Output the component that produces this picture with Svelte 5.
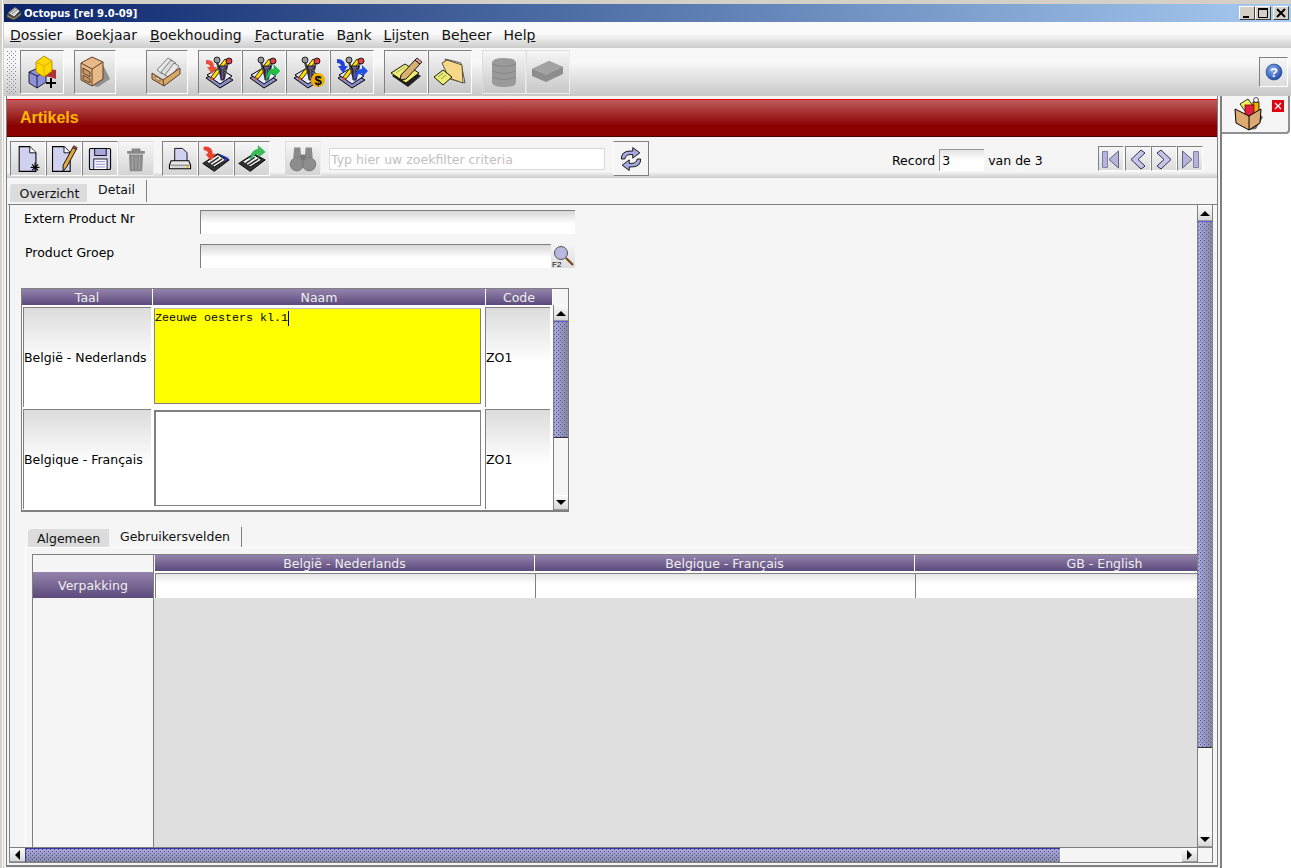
<script>
  const menus = [
    ['D', 'ossier'], ['Boek', 'j', 'aar'], ['', 'B', 'oekhouding'], ['', 'F', 'acturatie'],
    ['B', 'a', 'nk'], ['', 'L', 'ijsten'], ['Be', 'h', 'eer'], ['Hel', 'p', '']
  ]
  const menuItems = menus.map((m) => (m.length === 2 ? ['', m[0], m[1]] : m))

  const topTools = [
    { icon: 'cubes', cls: 'gap-r' }, { icon: 'cabinet', cls: 'narrow gap-r2' }, { icon: 'cards', cls: 'narrow gap-r' },
    { icon: 'toolIn' }, { icon: 'toolOut' }, { icon: 'toolMoney' }, { icon: 'toolBoth', cls: 'gap-r' },
    { icon: 'notepad' }, { icon: 'folder', cls: 'gap-r' },
    { icon: 'db', cls: 'off' }, { icon: 'block', cls: 'off' }
  ]
  const actions = [
    { icon: 'newdoc' }, { icon: 'editdoc' }, { icon: 'save' }, { icon: 'trash', cls: 'off gap' },
    { icon: 'print' }, { icon: 'diskIn' }, { icon: 'diskOut', cls: 'gap2' }, { icon: 'binoculars', cls: 'off gap3' }
  ]
  const rows = [
    { lang: 'België - Nederlands', text: 'Zeeuwe oesters kl.1', code: 'ZO1', active: true },
    { lang: 'Belgique - Français', text: '', code: 'ZO1', active: false }
  ]
  const langs = ['België - Nederlands', 'Belgique - Français', 'GB - English']
</script>

{#snippet tool(k)}
  <svg width="34" height="34" viewBox="0 0 34 34">
    <path d="M3 23 L15 16 L30 25 L17 33 Z" fill="#8d8dc8" stroke="#000"/>
    <path d="M4 20 L16 13 L29 21 L17 29 Z" fill="#e8e8ff" stroke="#000"/>
    <path d="M8 22 L22 4 L25 6 L11 24 Z" fill="#ffe000" stroke="#000" stroke-width=".8"/>
    <path d="M8 22 L7 26 L11 24Z" fill="#e06030"/>
    <path d="M14 7 L19 24" stroke="#444" stroke-width="2.4"/>
    <path d="M25 7 L21 24" stroke="#555" stroke-width="2"/>
    <path d="M16 11 H24 L23 14 H21 V25 H18 V14 H17Z" fill="#6a5a90" stroke="#000" stroke-width=".8"/>
    <circle cx="14" cy="5" r="3" fill="#999" stroke="#000" stroke-width=".8"/>
    <circle cx="26" cy="6" r="3" fill="#e04040" stroke="#000" stroke-width=".8"/>
    {#if k === 'toolIn'}
      <path d="M3 5 Q11 4 11 12 L14 12 L9 19 L4 12 L7 12 Q7 9 3 9Z" fill="#e8503a"/>
    {:else if k === 'toolOut'}
      <path d="M19 27 Q19 14 27 14 L27 10 L33 16 L27 22 L27 18 Q22 18 19 27Z" fill="#22c040" stroke="#0a6" stroke-width=".5"/>
    {:else if k === 'toolMoney'}
      <circle cx="27" cy="25" r="7" fill="#f0b000"/>
      <text x="27" y="30" font-size="13" font-weight="700" text-anchor="middle" fill="#000" font-family="Liberation Sans, sans-serif">$</text>
    {:else}
      <path d="M2 4 Q10 4 10 11 L13 11 L8 18 L3 11 L6 11 Q6 8 2 8Z" fill="#2040e0"/>
      <path d="M19 27 Q19 14 27 14 L27 10 L33 16 L27 22 L27 18 Q22 18 19 27Z" fill="#2050e8"/>
    {/if}
  </svg>
{/snippet}

{#snippet icon(k)}
  {#if k.startsWith('tool')}
    {@render tool(k)}
  {:else}
    <svg width="34" height="34" viewBox="0 0 34 34">
      {#if k === 'cubes'}
        <path d="M18 21 Q22 13 31 15 L31 24 L25 22 Z" fill="#b03038"/>
        <path d="M4 17 L13 13 L21 17 L21 27 L12 33 L4 28 Z" fill="#8f8fe0" stroke="#000" stroke-width=".8"/>
        <path d="M4 17 L12 21 L12 33 M12 21 L21 17" fill="none" stroke="#000" stroke-width=".8"/>
        <path d="M11 7 L19 1 L27 6 L27 16 L19 22 L11 17 Z" fill="#ffd800" stroke="#a08000" stroke-width=".8"/>
        <path d="M11 7 L19 11 L27 6 M19 11 L19 22" fill="none" stroke="#d0a000" stroke-width=".8"/>
        <path d="M26 23 V33 M21 28 H31" stroke="#000" stroke-width="2"/>
      {:else if k === 'cabinet'}
        <path d="M24 8 L32 24 L20 32 L12 30Z" fill="#909090"/>
        <path d="M3 8 L14 2 L25 7 L25 24 L14 31 L3 25 Z" fill="#e8b888" stroke="#5a4028"/>
        <path d="M3 8 L14 14 L25 7 M14 14 L14 31" fill="none" stroke="#5a4028"/>
        <path d="M5 13 L12 17 L12 22 L5 18Z M5 20 L12 24 L12 28 L5 24.5Z" fill="#c89868" stroke="#5a4028"/>
      {:else if k === 'cards'}
        <path d="M7 15 L18 3 L23 6 L12 19Z" fill="#e8e8e8" stroke="#666" stroke-width=".8"/>
        <path d="M11 17 L21 5 L26 8 L16 21Z" fill="#dcdcdc" stroke="#666" stroke-width=".8"/>
        <path d="M15 20 L24 8 L29 11 L20 23Z" fill="#e8e8e8" stroke="#666" stroke-width=".8"/>
        <path d="M2 18 L13 25 L30 13 L30 19 L14 31 L2 24Z" fill="#d8a868" stroke="#5a4028"/>
        <path d="M13 25 L14 31" stroke="#5a4028"/>
        <path d="M5 21 L10 24 L10 26.5 L5 23.5Z" fill="#f0d8b0" stroke="#5a4028" stroke-width=".6"/>
      {:else if k === 'notepad'}
        <path d="M3 21 L17 11 L32 21 L19 32 Z" fill="#222"/>
        <path d="M2 18 L16 9 L30 18 L17 28 Z" fill="#ecec70" stroke="#000" stroke-width=".9"/>
        <path d="M7 18 L16 12 M11 21 L20 15" stroke="#998" stroke-width=".8"/>
        <path d="M12 20 L26 5 L31 9 L17 24 L11 25 Z" fill="#d8b070" stroke="#000" stroke-width=".9"/>
        <path d="M26 5 L28 3 L33 7 L31 9Z" fill="#e8a0a0" stroke="#000" stroke-width=".8"/>
      {:else if k === 'folder'}
        <path d="M12 4 L28 8 L32 28 L17 24Z" fill="#fff" stroke="#555"/>
        <path d="M9 8 L14 5 L29 10 L30 28 L16 23 Z" fill="#f8d888" stroke="#553"/>
        <path d="M1 22 L10 15 L19 22 L10 30 Z" fill="#ecec70" stroke="#000" stroke-width=".9"/>
        <path d="M5 22 L10 18 M8 24 L13 20" stroke="#776" stroke-width=".8"/>
      {:else if k === 'db'}
        <path d="M5 8 Q5 3 17 3 Q29 3 29 8 L29 27 Q29 32 17 32 Q5 32 5 27 Z" fill="#9a9a9a"/>
        <path d="M5 9 Q17 14 29 9 M5 16 Q17 21 29 16 M5 22 Q17 27 29 22" stroke="#858585" fill="none"/>
      {:else if k === 'block'}
        <path d="M1 14 L18 6 L32 12 L32 19 L15 27 L1 21 Z" fill="#8d8d8d"/>
        <path d="M1 14 L18 6 L32 12 L15 20 Z" fill="#a3a3a3"/>
      {:else if k === 'newdoc'}
        <path d="M7 3 H19 L26 10 V31 H7 Z" fill="#d0d0f0" stroke="#000" stroke-width="1.2"/>
        <path d="M19 3 V10 H26" fill="#fff" stroke="#000"/>
        <path d="M25 21 V32 M20 26.5 H30 M21.5 23 L28.5 30 M28.5 23 L21.5 30" stroke="#000" stroke-width="1.2"/>
      {:else if k === 'editdoc'}
        <path d="M4 3 H17 L24 10 V31 H4 Z" fill="#d0d0f0" stroke="#000" stroke-width="1.2"/>
        <path d="M17 3 V10 H24" fill="#fff" stroke="#000"/>
        <path d="M16 24 L27 4 L31 6 L20 26 L16 31 Z" fill="#e0a840" stroke="#000"/>
        <path d="M27 4 L28 2 L32 4 L31 6Z" fill="#d85050" stroke="#000" stroke-width=".7"/>
      {:else if k === 'save'}
        <rect x="5" y="5" width="24" height="24" rx="1.5" fill="#d0d0f0" stroke="#000" stroke-width="1.2"/>
        <rect x="11" y="5" width="13" height="8" fill="#a8a8d8" stroke="#000"/>
        <rect x="10" y="17" width="15" height="12" fill="#fff" stroke="#000"/>
        <path d="M12 20 H23 M12 23 H23 M12 26 H23" stroke="#8080c8"/>
      {:else if k === 'trash'}
        <path d="M12 5 H22 V8 H12Z M7 8 H27 V11 H7Z" fill="#888"/>
        <path d="M9 12 H25 L24 31 H10 Z" fill="#8c8c8c"/>
        <path d="M13 14 V29 M17 14 V29 M21 14 V29" stroke="#aaa"/>
      {:else if k === 'print'}
        <path d="M11 5 H20 L25 10 V20 H11 Z" fill="#d0d0f0" stroke="#000"/>
        <path d="M7 19 H27 L29 24 V28 H5 V24 Z" fill="#e8e8e8" stroke="#000" stroke-width="1.2"/>
        <path d="M6 24 H28" stroke="#666"/>
        <path d="M8 26 H23" stroke="#999" stroke-dasharray="1 1"/>
        <rect x="24" y="25" width="3" height="2" fill="#e0c020"/>
      {:else if k === 'diskIn' || k === 'diskOut'}
        <path d="M2 22 L19 11 L32 18 L15 31 Z" fill="#333" stroke="#000"/>
        <path d="M6 20 L19 12 L28 18 L15 26 Z" fill="#eee" stroke="#000"/>
        <path d="M10 22 L20 15 M13 24 L24 17" stroke="#222" stroke-width="1.6"/>
        {#if k === 'diskIn'}
          <path d="M21 12 L30 16 L26 19" fill="none" stroke="#3040d0" stroke-width="1.6"/>
          <path d="M3 3 Q13 2 13 11 L17 11 L11 19 L5 11 L8 11 Q8 7 3 7Z" fill="#e8402a"/>
        {:else}
          <path d="M15 19 Q15 7 24 6 L24 2 L32 9 L24 15 L24 11 Q19 11 15 19Z" fill="#38c050" stroke="#085" stroke-width=".5"/>
        {/if}
      {:else if k === 'binoculars'}
        <path d="M7 4 H14 L15 16 H6 Z M20 4 H27 L28 16 H19 Z" fill="#8a8a8a"/>
        <rect x="14" y="12" width="6" height="7" fill="#777"/>
        <circle cx="10" cy="23" r="7.5" fill="#8d8d8d" stroke="#777"/>
        <circle cx="24" cy="23" r="7.5" fill="#8d8d8d" stroke="#777"/>
      {:else if k === 'refresh'}
        <path d="M6 17 Q6 8 16 8 L19 8 L19 4 L27 10 L19 16 L19 12 L16 12 Q11 12 10 17 Z" fill="#a8a8e0" stroke="#000"/>
        <path d="M28 17 Q28 26 18 26 L15 26 L15 30 L7 24 L15 18 L15 22 L18 22 Q23 22 24 17 Z" fill="#a8a8e0" stroke="#000"/>
      {/if}
    </svg>
  {/if}
{/snippet}

<div class="window">
  <div class="titlebar">
    <svg class="app-ico" width="16" height="16" viewBox="0 0 16 16">
      <path d="M1 9 L8 13 L15 7 L15 10 L8 15 L1 12Z" fill="#a08868" stroke="#443"/>
      <path d="M2 8 L9 2 L14 6 L8 12Z" fill="#ddd" stroke="#555"/>
      <path d="M4 8 L10 3 M6 9 L12 4" stroke="#777"/>
    </svg>
    <span class="title">Octopus [rel 9.0-09]</span>
    <div class="win-btns">
      <button class="win-btn"><svg width="14" height="12"><rect x="3" y="9" width="6" height="2" fill="#000"/></svg></button>
      <button class="win-btn"><svg width="14" height="12"><path d="M2.5 1.5 H11.5 V10.5 H2.5Z" fill="none" stroke="#000"/><path d="M2 2 H12" stroke="#000" stroke-width="2"/></svg></button>
      <button class="win-btn close"><svg width="14" height="12"><path d="M3 2 L11 10 M11 2 L3 10" stroke="#000" stroke-width="2"/></svg></button>
    </div>
  </div>

  <nav class="menubar">
    {#each menuItems as m}
      <span class="menu">{m[0]}<u>{m[1]}</u>{m[2]}</span>
    {/each}
  </nav>

  <div class="toolbar">
    <span class="gripper"></span>
    {#each topTools as t}
      <button class="tbtn {t.cls ?? ''}">{@render icon(t.icon)}</button>
    {/each}
    <button class="help">
      <svg width="20" height="20" viewBox="0 0 20 20">
        <defs><radialGradient id="hb" cx=".4" cy=".35" r=".7"><stop offset="0" stop-color="#8fb0f0"/><stop offset="1" stop-color="#1a48a8"/></radialGradient></defs>
        <circle cx="10" cy="10" r="8" fill="url(#hb)" stroke="#20408a" stroke-width=".6"/>
        <text x="10" y="14.5" font-size="13" font-weight="700" text-anchor="middle" fill="#fff" font-family="Liberation Sans, sans-serif">?</text>
      </svg>
    </button>
  </div>

  <div class="body">
    <main class="panel">
      <div class="banner">Artikels</div>

      <div class="actions">
        {#each actions as a}
          <button class="abtn {a.cls ?? ''}">{@render icon(a.icon)}</button>
        {/each}
        <input class="search" placeholder="Typ hier uw zoekfilter criteria" />
        <button class="abtn refresh">{@render icon('refresh')}</button>
        <div class="record">
          <span>Record</span><input class="rec-input" value="3" /><span>van de 3</span>
        </div>
        <div class="nav">
          <button class="nbtn">
            <svg width="22" height="22" viewBox="0 0 22 22"><path d="M2.5 3.5 H7.5 V19.5 H2.5Z" fill="#b4b4dc" stroke="#8080a0"/><path d="M18.5 3 V20 L9 11.5Z" fill="#b4b4dc" stroke="#606080"/></svg>
          </button>
          <button class="nbtn gap-n">
            <svg width="22" height="22" viewBox="0 0 22 22"><path d="M14 2 L18 5 L11 11.5 L18 18 L14 21 L4 11.5Z" fill="#c4c4e8" stroke="#303050"/></svg>
          </button>
          <button class="nbtn">
            <svg width="22" height="22" viewBox="0 0 22 22"><path d="M8 2 L4 5 L11 11.5 L4 18 L8 21 L18 11.5Z" fill="#c4c4e8" stroke="#303050"/></svg>
          </button>
          <button class="nbtn">
            <svg width="22" height="22" viewBox="0 0 22 22"><path d="M14.5 3.5 H19.5 V19.5 H14.5Z" fill="#b4b4dc" stroke="#8080a0"/><path d="M3.5 3 V20 L13 11.5Z" fill="#b4b4dc" stroke="#606080"/></svg>
          </button>
        </div>
      </div>

      <div class="tabs">
        <span class="tab t-over">Overzicht</span>
        <span class="tab on t-detail">Detail</span>
      </div>

      <div class="scroller">
        <div class="viewport">
          <div class="form-row first">
            <label class="lbl" for="ext">Extern Product Nr</label>
            <input id="ext" class="field wide" />
          </div>
          <div class="form-row second">
            <label class="lbl alt" for="grp">Product Groep</label>
            <input id="grp" class="field" />
            <button class="f2">
              <svg width="24" height="24" viewBox="0 0 24 24">
                <circle cx="10" cy="9" r="6.5" fill="#b8b8e0" stroke="#555"/>
                <path d="M15 14 L22 21" stroke="#7a4a20" stroke-width="2.4"/>
                <text x="1" y="23" font-size="8" fill="#000" font-family="Liberation Sans, sans-serif">F2</text>
              </svg>
            </button>
          </div>

          <div class="names">
            <div class="names-head">
              <span class="hd c1">Taal</span><span class="hd c2">Naam</span><span class="hd c3">Code</span>
            </div>
            <div class="names-body">
              <div class="names-rows">
                {#each rows as r}
                  <div class="nrow">
                    <div class="ncell c1">{r.lang}</div>
                    <div class="editor" class:active={r.active}>
                      {#if r.text}<span class="typed">{r.text}</span>{/if}
                    </div>
                    <div class="ncell c3">{r.code}</div>
                  </div>
                {/each}
              </div>
              <div class="vbar small">
                <button class="sb up"><span class="tri-u"></span></button>
                <div class="thumb small-thumb"></div>
                <div class="track"></div>
                <button class="sb"><span class="tri-d"></span></button>
              </div>
            </div>
          </div>

          <div class="subtabs">
            <span class="tab sub t-alg">Algemeen</span>
            <span class="tab on sub t-geb">Gebruikersvelden</span>
          </div>

          <div class="subpanel">
            <div class="fields">
              <div class="fields-side">
                <div class="corner"></div>
                <div class="rowhead">Verpakking</div>
              </div>
              <div class="fields-main">
                <div class="fhead">
                  {#each langs as l}<span class="hd fcol">{l}</span>{/each}
                </div>
                <div class="fcells">
                  {#each langs as l}<input class="fcell" aria-label={l} />{/each}
                </div>
                <div class="empty"></div>
              </div>
            </div>
          </div>
        </div>

        <div class="vbar">
          <button class="sb up"><span class="tri-u"></span></button>
          <div class="thumb big-thumb"></div>
          <div class="track"></div>
          <button class="sb"><span class="tri-d"></span></button>
        </div>

        <div class="hbar">
          <button class="sb h"><span class="tri-l"></span></button>
          <div class="hthumb"></div>
          <div class="track"></div>
          <button class="sb h"><span class="tri-r"></span></button>
        </div>
        <div class="sc-corner"></div>
      </div>
    </main>

    <aside class="side">
      <div class="doc-tab">
        <svg width="34" height="34" viewBox="0 0 34 34">
          <path d="M22 14 L30 20 L23 32 L16 33Z" fill="#666"/>
          <path d="M7 7 L15 2 L20 9 L12 14Z" fill="#f0f060" stroke="#000" stroke-width=".8"/>
          <rect x="20" y="5" width="6" height="13" fill="#f0b000" stroke="#000" stroke-width=".8"/>
          <circle cx="23" cy="3" r="2.4" fill="#fff" stroke="#000" stroke-width=".7"/>
          <rect x="12" y="8" width="9" height="11" fill="#e02040" stroke="#700" stroke-width=".8"/>
          <path d="M2 12 L16 19 L28 12 L27 26 L16 33 L3 26 Z" fill="#dcaa70" stroke="#000"/>
          <path d="M16 19 V33" stroke="#000"/>
        </svg>
        <span class="tab-close">
          <svg width="10" height="10"><path d="M2 2 L8 8 M8 2 L2 8" stroke="#fff" stroke-width="1.2"/></svg>
        </span>
      </div>
      <div class="side-pane"></div>
    </aside>
  </div>
</div>

<style>
  :global(body) { margin: 0; background: #d4d0c8; }
  .window {
    width: 1291px;
    height: 868px;
    box-sizing: border-box;
    padding: 4px 0 0 4px;
    display: flex;
    flex-direction: column;
    overflow: hidden;
    font-family: "DejaVu Sans", sans-serif;
    color: #000;
    background: linear-gradient(90deg, #d4d0c8 0 2px, #fff 2px 3px, #d4d0c8 3px);
  }
  button { padding: 0; margin: 0; font: inherit; background: none; }
  button, input { box-sizing: border-box; }

  .titlebar {
    height: 18px;
    flex: none;
    display: flex;
    align-items: center;
    background: linear-gradient(90deg, #0a246a, #a6caf0);
    color: #fff;
    font: 700 10px "DejaVu Sans", sans-serif;
  }
  .app-ico { margin: 0 2px 0 2px; }
  .win-btns { margin-left: auto; margin-right: 2px; display: flex; }
  .win-btn {
    width: 16px;
    height: 14px;
    display: flex;
    align-items: center;
    justify-content: center;
    background: #d4d0c8;
    border: 1px solid;
    border-color: #fff #404040 #404040 #fff;
  }
  .win-btn.close { margin-left: 2px; }

  .menubar {
    height: 26px;
    flex: none;
    display: flex;
    align-items: center;
    padding-left: 6px;
    gap: 13px;
    background: linear-gradient(#fafafa 0 45%, #ccc);
    font-size: 14px;
    color: #111;
  }
  .menu:nth-child(n+5) { margin-left: -1px; }
  .toolbar {
    height: 48px;
    flex: none;
    display: flex;
    align-items: flex-start;
    padding-top: 2px;
    box-sizing: border-box;
    background: linear-gradient(#f8f8f8 0 30%, #c8c8c8);
  }
  .gripper {
    width: 9px;
    height: 43px;
    margin: 1px 4px 0 3px;
    background-image:
      conic-gradient(from 270deg at 1px 1px, #888 90deg, transparent 0),
      conic-gradient(from 270deg at 1px 1px, #888 90deg, transparent 0);
    background-size: 4px 4px;
    background-position: 0 0, 2px 2px;
  }
  .tbtn {
    width: 44px;
    height: 44px;
    display: flex;
    align-items: center;
    justify-content: center;
    border: 1px solid;
    border-color: #808080 #fff #fff #808080;
    outline: 0;
    background: linear-gradient(#f6f6f6, #c8c8c8);
  }
  .tbtn.narrow { width: 42px; }
  .tbtn.gap-r { margin-right: 10px; }
  .tbtn.gap-r2 { margin-right: 30px; }
  .tbtn.off { border-color: #ddd #eee #eee #ddd; }
  .help {
    width: 29px;
    height: 30px;
    margin: 7px 3px 0 auto;
    display: flex;
    align-items: center;
    justify-content: center;
    border: 1px solid;
    border-color: #808080 #fff #fff #808080;
    background: linear-gradient(#f6f6f6, #dcdcdc);
  }

  .body { flex: 1; min-height: 0; display: flex; background: #f5f5f5; }
  .panel {
    width: 1212px;
    flex: none;
    box-sizing: border-box;
    margin-left: 2px;
    padding-top: 3px;
    border-left: 1px solid #808080;
    border-right: 1px solid #808080;
    border-bottom: 2px solid #808080;
    margin-bottom: 1px;
    display: flex;
    flex-direction: column;
    background: #f5f5f5;
  }
  .banner {
    height: 38px;
    flex: none;
    box-sizing: border-box;
    padding-left: 13px;
    display: flex;
    align-items: center;
    border-top: 1px solid #e80000;
    border-bottom: 1px solid #500000;
    background: linear-gradient(#bc5c5c, #8b0000 72%);
    color: #ffb400;
    font: 700 16px "Liberation Sans", sans-serif;
  }

  .actions {
    height: 41px;
    flex: none;
    box-sizing: border-box;
    padding: 4px 0 0 3px;
    display: flex;
    align-items: flex-start;
    background: linear-gradient(#f5f5f5 0 85%, #cbcbcb);
  }
  .abtn {
    width: 36px;
    height: 35px;
    display: flex;
    align-items: center;
    justify-content: center;
    border: 1px solid;
    border-color: #808080 #fff #fff #808080;
    background: linear-gradient(#f6f6f6, #d4d4d4);
  }
  .abtn svg { width: 30px; height: 30px; }
  .abtn.off { border-color: #ddd #eee #eee #ddd; }
  .abtn.gap { margin-right: 8px; }
  .abtn.gap2 { margin-right: 15px; }
  .abtn.gap3 { margin-right: 8px; }
  .search {
    width: 276px;
    height: 22px;
    margin: 7px 8px 0 0;
    padding: 0 1px;
    border: 1px solid #d8d8d8;
    background: #fff;
    font: 12.5px "DejaVu Sans", sans-serif;
    outline: 0;
  }
  .search::placeholder { color: #c4c0c0; opacity: 1; }
  .refresh { background: #f5f5f5; border-color: #808080; border-left-color: #fff; }
  .record {
    margin: 8px 0 0 243px;
    display: flex;
    align-items: center;
    font-size: 12.5px;
    height: 22px;
  }
  .rec-input {
    width: 45px;
    height: 22px;
    margin: 0 4px;
    padding: 0 2px;
    border: 0;
    border-top: 1px solid #999;
    border-left: 1px solid #999;
    background: linear-gradient(#e4e4e4, #fff 50%);
    font: 12.5px "DejaVu Sans", sans-serif;
    outline: 0;
  }
  .nav { margin: 5px 14px 0 auto; display: flex; }
  .nbtn {
    width: 26px;
    height: 25px;
    display: flex;
    align-items: center;
    justify-content: center;
    border: 1px solid;
    border-color: #808080 #fff #fff #808080;
    background: linear-gradient(#f6f6f6, #dcdcdc);
  }
  .nbtn.gap-n { margin-left: 1px; }

  .tabs {
    height: 27px;
    flex: none;
    box-sizing: border-box;
    padding: 3px 0 0 2px;
    margin-left: 1px;
    display: flex;
    align-items: flex-end;
    border-bottom: 1px solid #808080;
    font-size: 12.5px;
  }
  .tab {
    height: 18px;
    box-sizing: border-box;
    display: flex;
    align-items: center;
    justify-content: center;
    background: #dcdcdc;
    color: #111;
    border-radius: 3px 0 0 0;
    margin-bottom: 2px;
  }
  .tab.on {
    height: 22px;
    background: #f5f5f5;
    border-right: 1px solid #808080;
    padding-bottom: 3px;
  }
  .t-over { width: 77px; padding-left: 2px; }
  .t-detail { width: 60px; }
  .t-alg { width: 81px; }
  .t-geb { width: 133px; }

  .scroller {
    flex: 1;
    min-height: 0;
    width: 1202px;
    display: grid;
    grid-template-columns: 1187px 15px;
    grid-template-rows: 1fr 15px;
    border-left: 1px solid #808080;
    border-right: 1px solid #808080;
    border-bottom: 1px solid #808080;
    margin: 0 0 2px 2px;
    box-sizing: content-box;
  }
  .viewport { min-width: 0; min-height: 0; overflow: hidden; }

  .form-row { display: flex; align-items: flex-start; }
  .form-row.first { margin-top: 5px; height: 24px; }
  .form-row.second { margin-top: 10px; height: 24px; }
  .lbl { width: 176px; margin-left: 14px; padding-top: 1px; font-size: 12.5px; }
  .lbl.alt { margin-left: 15px; width: 175px; }
  .field {
    width: 351px;
    height: 24px;
    border: 0;
    border-top: 1px solid #808080;
    border-left: 1px solid #808080;
    background: linear-gradient(#d8d8d8, #fff 55%);
    outline: 0;
  }
  .field.wide { width: 375px; }
  .f2 {
    width: 24px;
    height: 24px;
    border: 0;
    background: linear-gradient(#f5f5f5, #ddd);
  }

  .names {
    width: 548px;
    height: 224px;
    box-sizing: border-box;
    margin: 20px 0 0 11px;
    border: 1px solid #808080;
    border-bottom-width: 2px;
    background: #fff;
  }
  .names-head {
    height: 16px;
    display: flex;
    background: #f5f5f5;
  }
  .hd {
    box-sizing: border-box;
    display: flex;
    align-items: center;
    justify-content: center;
    height: 16px;
    background: linear-gradient(#9484ac, #5c4a7c);
    color: #eee;
    border-right: 1px solid #fff;
    font-size: 12.5px;
  }
  .names-head .c1 { width: 131px; }
  .names-head .c2 { width: 333px; }
  .names-head .c3 { width: 67px; }
  .names-body { display: flex; height: 205px; }
  .names-rows { width: 531px; padding-top: 1px; }
  .nrow { height: 102px; display: flex; }
  .ncell {
    box-sizing: border-box;
    display: flex;
    align-items: center;
    border-top: 1px solid #808080;
    border-left: 1px solid #808080;
    background: linear-gradient(#dcdcdc, #fff 55%);
    font-size: 12.5px;
    white-space: nowrap;
    height: 100px;
    margin-top: 1px;
  }
  .ncell.c1 { width: 128px; margin-left: 1px; margin-right: 3px; }
  .ncell.c3 { width: 65px; margin-left: 4px; }
  .editor {
    width: 327px;
    height: 96px;
    box-sizing: border-box;
    margin-top: 2px;
    border: 1px solid #808080;
    border-top-width: 2px;
    border-left-width: 2px;
    background: #fff;
  }
  .editor.active { background: #ff0; border-width: 1px; border-top-color: #bbb; }
  .typed {
    display: block;
    width: fit-content;
    margin-top: 2px;
    font: 11.67px/15px "Liberation Mono", monospace;
    border-right: 1px solid #000;
  }

  .vbar { display: flex; flex-direction: column; min-height: 0; border-left: 1px solid #808080; box-sizing: border-box; background: #f5f5f5; }
  .vbar.small { width: 15px; }
  .sb {
    flex: none;
    height: 15px;
    display: flex;
    align-items: center;
    justify-content: center;
    border: 0;
    border-top: 1px solid #fff;
    border-bottom: 1px solid #999;
    background: linear-gradient(#f8f8f8, #d8d8d8);
  }
  .sb.h { width: 15px; height: 14px; }
  .sb.up { height: 16px; }
  .tri-u, .tri-d, .tri-l, .tri-r { width: 0; height: 0; border: 5px solid transparent; }
  .tri-u { border-bottom-color: #000; border-top-width: 0; }
  .tri-d { border-top-color: #000; border-bottom-width: 0; }
  .tri-l { border-right-color: #000; border-left-width: 0; }
  .tri-r { border-left-color: #000; border-right-width: 0; }
  .thumb, .hthumb {
    background-image:
      conic-gradient(from 270deg at 1px 1px, #50507a 90deg, transparent 0),
      conic-gradient(from 270deg at 1px 1px, #50507a 90deg, transparent 0),
      linear-gradient(90deg, #a8a8e0, #8888a8);
    background-size: 4px 4px, 4px 4px, 100% 100%;
    background-position: 0 0, 2px 2px, 0 0;
    box-sizing: border-box;
    flex: none;
  }
  .hthumb {
    width: 1035px;
    background-image:
      conic-gradient(from 270deg at 1px 1px, #50507a 90deg, transparent 0),
      conic-gradient(from 270deg at 1px 1px, #50507a 90deg, transparent 0),
      linear-gradient(#a8a8e0, #8888a8);
    border-top: 1px solid #3838a0;
    border-left: 1px solid #3838a0;
  }
  .thumb { border-top: 1px solid #6060e0; border-bottom: 1px solid #333; }
  .small-thumb { height: 117px; }
  .big-thumb { height: 527px; }
  .track { flex: 1; background: #f5f5f5; }

  .hbar {
    display: flex;
    border-top: 1px solid #808080;
    box-sizing: border-box;
  }
  .sc-corner { background: #f5f5f5; border-top: 1px solid #808080; border-left: 1px solid #808080; }

  .subtabs {
    height: 20px;
    margin: 15px 0 0 18px;
    display: flex;
    align-items: flex-end;
    font-size: 12.5px;
  }
  .tab.sub { margin-bottom: 0; }
  .tab.sub.on { height: 20px; padding-bottom: 2px; }
  .subpanel {
    margin-left: 15px;
    padding: 6px 0 0 6px;
    border-top: 1px solid #fff;
    border-left: 1px solid #fff;
  }
  .fields {
    height: 300px;
    display: flex;
    border-left: 1px solid #808080;
  }
  .fields-side { width: 120px; flex: none; border-right: 1px solid #808080; }
  .corner { height: 18px; border-top: 1px solid #808080; box-sizing: border-box; }
  .rowhead {
    height: 26px;
    display: flex;
    align-items: center;
    justify-content: center;
    background: linear-gradient(#9484ac, #5c4a7c);
    color: #eee;
    font-size: 12.5px;
  }
  .fields-main { flex: 1; min-width: 0; display: flex; flex-direction: column; }
  .fhead { display: flex; height: 17px; border-top: 1px solid #808080; box-sizing: border-box; padding-left: 1px; }
  .fcol { width: 380px; flex: none; }
  .fcells { display: flex; height: 27px; background: #fff; }
  .fcell {
    width: 380px;
    flex: none;
    height: 25px;
    margin-top: 2px;
    border: 0;
    border-left: 1px solid #808080;
    border-top: 1px solid #808080;
    background: linear-gradient(#e4e4e4, #fff 40%);
    outline: 0;
  }
  .fcell:first-child { margin-left: 1px; }
  .empty { flex: 1; background: #dfdfdf; }

  .side { flex: 1; min-width: 0; border-left: 2px solid #808080; margin-left: 2px; background: #fff; display: flex; flex-direction: column; }
  .doc-tab {
    height: 38px;
    box-sizing: border-box;
    flex: none;
    display: flex;
    width: 68px;
    padding: 1px 0 0 11px;
    background: #f5f5f5;
    border-right: 2px solid #909090;
    border-bottom: 2px solid #909090;
    border-radius: 0 0 4px 0;
    position: relative;
  }
  .tab-close {
    position: absolute;
    right: 4px;
    top: 4px;
    width: 12px;
    height: 12px;
    display: flex;
    align-items: center;
    justify-content: center;
    background: #e00010;
  }
  .side-pane { flex: 1; background: #fff; }
</style>
